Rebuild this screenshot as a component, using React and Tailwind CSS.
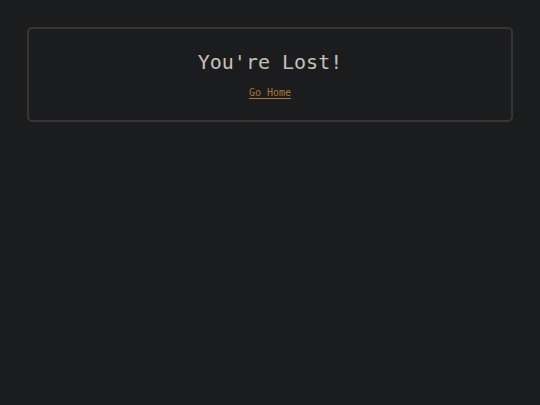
export default function App() {
  return (
    <div className="min-h-screen bg-[#1b1c1d] p-[27px] font-['DejaVu_Sans_Mono','Liberation_Mono',monospace]">
      <div className="rounded-[5px] border-2 border-[#3a352c] px-6 pt-[19px] pb-[17px] text-center">
        <h1 className="text-[20px] leading-[28px] text-[#c6c0b5]">You're Lost!</h1>
        <a href="#" className="mt-[9px] inline-block text-[10px] leading-[15px] text-[#ad7636] underline underline-offset-2">
          Go Home
        </a>
      </div>
    </div>
  )
}
